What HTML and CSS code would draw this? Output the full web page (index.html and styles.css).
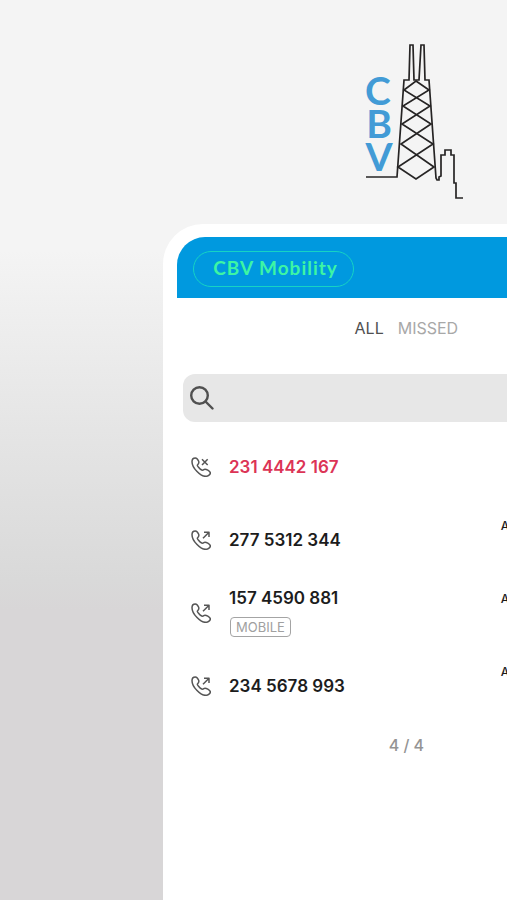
FILE: index.html
```html
<!DOCTYPE html>
<html lang="en">
<head>
<meta charset="utf-8">
<meta name="viewport" content="width=device-width, initial-scale=1">
<title>CBV Mobility</title>
<link rel="stylesheet" href="styles.css">
</head>
<body>
<svg class="defs" aria-hidden="true">
  <symbol id="handset" viewBox="0 0 60 60">
    <path d="M3 14C3 7 8 3 13 3C18 3 21 8 23 13C25 18 23 20 20 23C18 25 19 27 22 30C25 34 28 37 32 39C35 41 37 39 40 37C44 35 58 42 58 48C58 53 50 58 43 58C30 58 3 34 3 14Z"/>
  </symbol>
  <symbol id="missed" viewBox="0 0 60 60">
    <use href="#handset"/><path d="M33 7L50 24M50 7L33 24"/>
  </symbol>
  <symbol id="outgoing" viewBox="0 0 60 60">
    <use href="#handset"/><path d="M36 25L54 7M39 7H54V21"/>
  </symbol>
</svg>
<header class="brand">
  <svg class="logo" viewBox="0 0 100 160" role="img" aria-label="CBV">
    <g class="logo-letters">
      <text x="14" y="65">C</text>
      <text x="15" y="98">B</text>
      <text x="15" y="131">V</text>
    </g>
    <g class="logo-lines">
      <path d="M2 137H33L40 40H45L46 5H49L50 40H55L57 5H60L61 40H65L72 138L73 140H75V137L77 136V115H81V110H87V115H90V143H92V158H99"/>
      <path d="M52 41L65 50L39 66L67 84L37 104L70 127L52 139L34 127L69 104L38 84L66 66L40 50Z"/>
    </g>
  </svg>
</header>
<main class="panel">
  <div class="titlebar"><h1 class="title">CBV Mobility</h1></div>
  <nav class="tabs">
    <button class="tab tab-active" type="button">ALL</button>
    <button class="tab" type="button">MISSED</button>
  </nav>
  <form class="search">
    <label class="search-label" for="q" aria-label="Search calls">
      <svg class="search-icon" viewBox="0 0 24 24"><circle cx="9.5" cy="9.5" r="8.3"/><path d="M15.500 15.500L22.500 22.500"/></svg>
    </label>
    <input class="search-input" id="q" type="search">
  </form>
  <ul class="calls">
    <li class="call">
      <svg class="call-icon"><use href="#missed"/></svg>
      <div class="caller"><span class="number number-missed">231 4442 167</span></div>
    </li>
    <li class="call">
      <svg class="call-icon"><use href="#outgoing"/></svg>
      <div class="caller"><span class="number">277 5312 344</span></div>
      <span class="date">A</span>
    </li>
    <li class="call">
      <svg class="call-icon"><use href="#outgoing"/></svg>
      <div class="caller"><span class="number">157 4590 881</span><span class="badge">MOBILE</span></div>
      <span class="date">A</span>
    </li>
    <li class="call">
      <svg class="call-icon"><use href="#outgoing"/></svg>
      <div class="caller"><span class="number">234 5678 993</span></div>
      <span class="date">A</span>
    </li>
  </ul>
  <p class="pager">4 / 4</p>
</main>
</body>
</html>
```
FILE: styles.css
```css
* { box-sizing: border-box; }
body {
  margin: 0;
  min-height: 100vh;
  display: flex;
  flex-direction: column;
  overflow: hidden;
  background: linear-gradient(#f4f4f4 0, #f4f4f4 250px, #e5e5e5 430px, #d9d9d9 580px, #d8d6d7 610px, #d8d6d7 100%);
  font-family: Inter, "Liberation Sans", sans-serif;
  color: #1c1c1c;
}
.defs { position: absolute; width: 0; height: 0; }
.brand {
  height: 224px;
  padding: 40px 43px 0 0;
  display: flex;
  justify-content: flex-end;
  align-items: flex-start;
}
.logo { width: 100px; height: 160px; }
.logo-letters {
  fill: #429bd6;
  font-family: Lato, sans-serif;
  font-size: 39px;
  font-weight: 700;
  text-anchor: middle;
}
.logo-lines { fill: none; stroke: #262424; stroke-width: 1.7; }
.panel {
  flex: 1;
  width: 96vw;
  margin-left: 163px;
  padding: 13px 14px 0;
  border-radius: 40px 40px 0 0;
  background: #fff;
}
.titlebar {
  height: 61px;
  padding: 14px 16px 0;
  border-radius: 28px 28px 0 0;
  background: #0099df;
}
.title {
  width: 161px;
  margin: 0;
  padding-left: 4px;
  border: 1px solid #16d3c4;
  border-radius: 18px;
  color: #3df5a4;
  font: 700 19px/32px Lato, sans-serif;
  letter-spacing: 1px;
  padding-bottom: 2px;
  text-align: center;
}
.tabs {
  height: 60px;
  display: flex;
  justify-content: center;
  align-items: center;
  gap: 14px;
}
.tab {
  padding: 0;
  border: 0;
  background: none;
  color: #a8a8a8;
  font: 400 16px/20px Inter, sans-serif;
}
.tab-active { color: #505050; }
.search {
  height: 48px;
  margin: 16px 6px 8px;
  padding: 0 7px;
  display: flex;
  align-items: center;
  gap: 12px;
  border-radius: 12px;
  background: #e7e7e7;
}
.search-label { display: flex; }
.search-icon {
  width: 24px;
  height: 24px;
  fill: none;
  stroke: #505050;
  stroke-width: 2.4;
  stroke-linecap: round;
}
.search-input {
  flex: 1;
  min-width: 0;
  border: 0;
  outline: 0;
  background: none;
  font: 400 16px/20px Inter, sans-serif;
}
.calls { margin: 0; padding: 0 0 0 14px; list-style: none; }
.call { height: 73px; display: flex; align-items: center; }
.call-icon {
  width: 20px;
  height: 20px;
  margin-right: 18px;
  fill: none;
  stroke: #555;
  stroke-width: 4.5;
  stroke-linejoin: round;
}
.caller {
  flex: 1;
  display: flex;
  flex-direction: column;
  align-items: flex-start;
  gap: 9px;
}
.number { font-size: 17px; line-height: 20px; font-weight: 600; }
.number-missed { color: #dc3456; }
.badge {
  margin-left: 1px;
  padding: 0 5px;
  border: 1px solid #a4a4a4;
  border-radius: 4px;
  color: #a0a0a0;
  font-size: 13px;
  line-height: 18px;
}
.date {
  flex: 0 0 135px;
  padding-bottom: 27px;
  font-size: 12px;
  line-height: 16px;
  font-weight: 500;
}
.pager {
  margin: 13px 0 0;
  color: #949494;
  font-size: 16px;
  line-height: 20px;
  font-weight: 500;
  text-align: center;
}
```
